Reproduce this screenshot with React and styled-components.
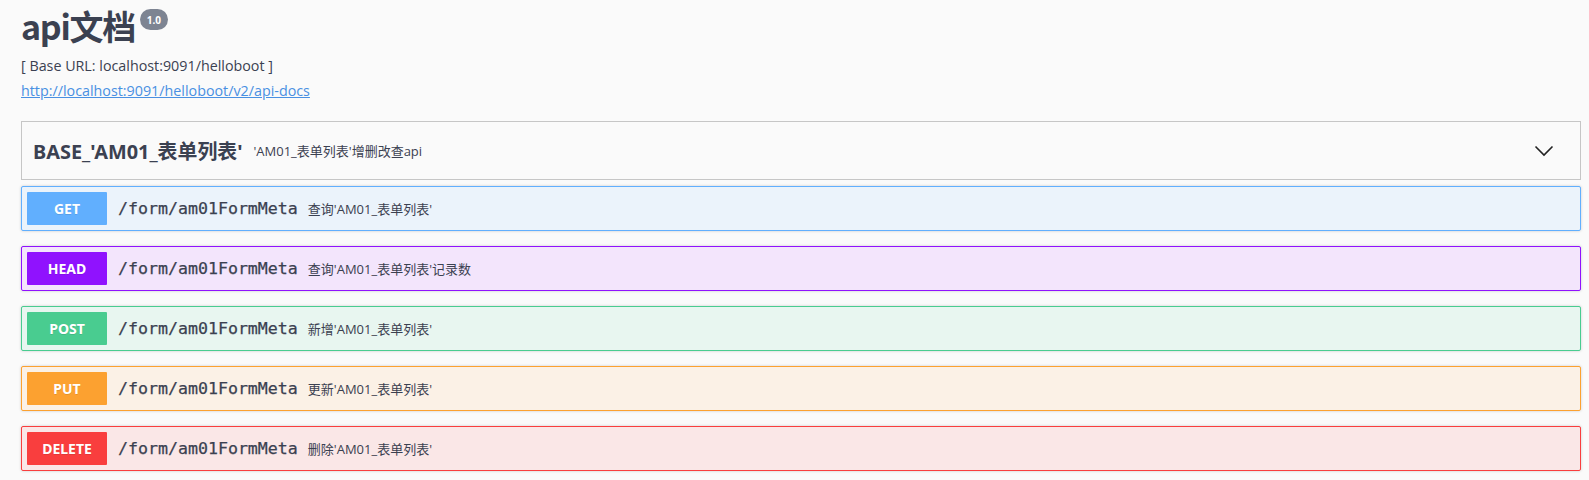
import React from "react";
import styled, { createGlobalStyle } from "styled-components";

const Global = createGlobalStyle`
  html, body { margin: 0; padding: 0; background: #fafafa; }
  body { font-family: "Open Sans", "Noto Sans CJK SC", sans-serif; color: #3b4151; }
`;

const Page = styled.div`
  padding: 0 8px 0 21px;
`;

const Info = styled.div`
  padding-top: 3px;
  margin-bottom: 18px;
`;

const TitleRow = styled.div`
  display: flex;
  align-items: flex-start;
  height: 50px;
`;

const Title = styled.h2`
  margin: 0;
  font-family: "Noto Sans CJK SC", "Noto Sans", sans-serif;
  font-size: 34px;
  font-weight: 700;
  line-height: 46px;
  letter-spacing: -1.3px;
  color: #3b4151;
`;

const Version = styled.span`
  margin: 6px 0 0 5px;
  display: inline-flex;
  align-items: center;
  justify-content: center;
  height: 21px;
  padding: 0 7px;
  border-radius: 57px;
  background: #7d8492;
  color: #fff;
  font-family: "Noto Sans", sans-serif;
  font-size: 10px;
  font-weight: 700;
`;

const BaseUrl = styled.div`
  font-size: 14.3px;
  line-height: 26px;
  color: #3b4151;
`;

const Link = styled.a`
  display: block;
  font-size: 14.3px;
  line-height: 24px;
  color: #4990e2;
  text-decoration: underline;
`;

const Tag = styled.div`
  display: flex;
  align-items: center;
  height: 57px;
  border: 1px solid #c6c6c6;
  padding: 0 26px 0 11px;
  margin-bottom: 6px;
`;

const TagName = styled.span`
  font-family: "Noto Sans", "Noto Sans CJK SC", sans-serif;
  font-size: 19.9px;
  font-weight: 700;
  color: #3b4151;
`;

const TagDesc = styled.span`
  margin-left: 11px;
  font-size: 13px;
  color: #3b4151;
  flex: 1;
`;

const Chevron = styled.svg`
  width: 20px;
  height: 12px;
`;

const Block = styled.div`
  display: flex;
  align-items: center;
  height: 43px;
  padding: 0 5px;
  margin-bottom: 15px;
  border: 1px solid ${(p) => p.$c};
  background: ${(p) => p.$bg};
  box-shadow: 0 0 3px rgba(0, 0, 0, 0.19);
  border-radius: 2px;
`;

const Method = styled.span`
  width: 80px;
  height: 33px;
  display: flex;
  align-items: center;
  justify-content: center;
  background: ${(p) => p.$c};
  color: #fff;
  font-family: "Noto Sans", sans-serif;
  font-size: 14px;
  font-weight: 700;
  text-shadow: 0 1px 0 rgba(0, 0, 0, 0.1);
  border-radius: 1px;
`;

const Path = styled.span`
  margin-left: 11px;
  font-family: "DejaVu Sans Mono", monospace;
  font-size: 16.6px;
  font-weight: 400;
  color: #3b4151;
  -webkit-text-stroke: 0.25px #3b4151;
`;

const Summary = styled.span`
  margin-left: 10px;
  font-size: 13px;
  color: #3b4151;
`;

const ops = [
  { m: "GET", c: "#61affe", bg: "#ebf3fb", s: "查询'AM01_表单列表'" },
  { m: "HEAD", c: "#9012fe", bg: "#f3e5fc", s: "查询'AM01_表单列表'记录数" },
  { m: "POST", c: "#49cc90", bg: "#e8f6f0", s: "新增'AM01_表单列表'" },
  { m: "PUT", c: "#fca130", bg: "#fbf1e6", s: "更新'AM01_表单列表'" },
  { m: "DELETE", c: "#f93e3e", bg: "#fae7e7", s: "删除'AM01_表单列表'" },
];

export default function App() {
  return (
    <Page>
      <Global />
      <Info>
        <TitleRow>
          <Title>api文档</Title>
          <Version>1.0</Version>
        </TitleRow>
        <BaseUrl>[ Base URL: localhost:9091/helloboot ]</BaseUrl>
        <Link href="#">http://localhost:9091/helloboot/v2/api-docs</Link>
      </Info>
      <Tag>
        <TagName>BASE_'AM01_表单列表'</TagName>
        <TagDesc>'AM01_表单列表'增删改查api</TagDesc>
        <Chevron viewBox="0 0 20 12">
          <path d="M1.5 1.5 L10 10 L18.5 1.5" fill="none" stroke="#222" strokeWidth="1.6" />
        </Chevron>
      </Tag>
      {ops.map((o) => (
        <Block key={o.m} $c={o.c} $bg={o.bg}>
          <Method $c={o.c}>{o.m}</Method>
          <Path>/form/am01FormMeta</Path>
          <Summary>{o.s}</Summary>
        </Block>
      ))}
    </Page>
  );
}
